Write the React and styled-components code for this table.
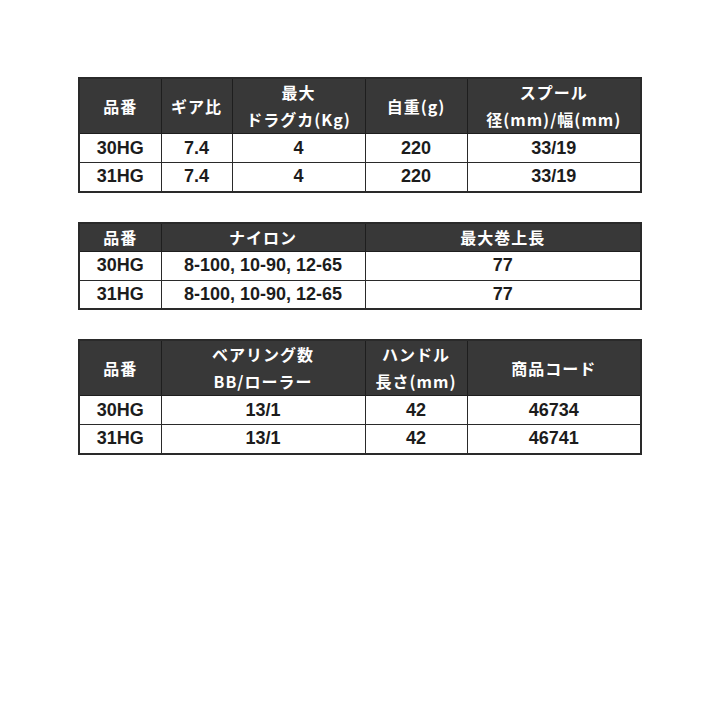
import React from "react"
import styled, { createGlobalStyle } from "styled-components"

const GlobalStyle = createGlobalStyle`
  html, body {
    margin: 0;
    padding: 0;
    background: #ffffff;
  }
  body {
    font-family: "Liberation Sans", "Noto Sans CJK JP", sans-serif;
  }
`

const Page = styled.div`
  padding: 77px 0 0 78px;
  display: flex;
  flex-direction: column;
  gap: 29px;
`

const SpecTable = styled.table`
  width: 562px;
  table-layout: fixed;
  border-collapse: collapse;
  border: 2px solid #2a2a2a;
`

const HeadRow = styled.tr`
  height: ${({ $tall }) => ($tall ? "55px" : "28px")};
`

const HeadCell = styled.th`
  background: #383838;
  color: #ffffff;
  font-family: "Noto Sans CJK JP", sans-serif;
  font-size: 16px;
  font-weight: 700;
  line-height: 27px;
  letter-spacing: 1px;
  text-align: center;
  vertical-align: middle;
  padding: 0;
  border: 1.5px solid #1e1e1e;
`

const BodyRow = styled.tr`
  height: 29px;
`

const Cell = styled.td`
  background: #ffffff;
  color: #1c1c1c;
  font-size: 18px;
  font-weight: 700;
  text-align: center;
  vertical-align: middle;
  padding: 0;
  border: 1.5px solid #2a2a2a;
`

const tables = [
  {
    cols: [82, 71, 133, 102, 174],
    tall: true,
    head: [["品番"], ["ギア比"], ["最大", "ドラグカ(Kg)"], ["自重(g)"], ["スプール", "径(mm)/幅(mm)"]],
    rows: [
      ["30HG", "7.4", "4", "220", "33/19"],
      ["31HG", "7.4", "4", "220", "33/19"],
    ],
  },
  {
    cols: [82, 204, 276],
    tall: false,
    head: [["品番"], ["ナイロン"], ["最大巻上長"]],
    rows: [
      ["30HG", "8-100, 10-90, 12-65", "77"],
      ["31HG", "8-100, 10-90, 12-65", "77"],
    ],
  },
  {
    cols: [82, 204, 102, 174],
    tall: true,
    head: [["品番"], ["ベアリング数", "BB/ローラー"], ["ハンドル", "長さ(mm)"], ["商品コード"]],
    rows: [
      ["30HG", "13/1", "42", "46734"],
      ["31HG", "13/1", "42", "46741"],
    ],
  },
]

export default function App() {
  return (
    <>
      <GlobalStyle />
      <Page>
        {tables.map((t, i) => (
          <SpecTable key={i}>
            <colgroup>
              {t.cols.map((w, j) => (
                <col key={j} style={{ width: w }} />
              ))}
            </colgroup>
            <thead>
              <HeadRow $tall={t.tall}>
                {t.head.map((lines, j) => (
                  <HeadCell key={j}>
                    {lines.map((l, k) => (
                      <div key={k}>{l}</div>
                    ))}
                  </HeadCell>
                ))}
              </HeadRow>
            </thead>
            <tbody>
              {t.rows.map((r, j) => (
                <BodyRow key={j}>
                  {r.map((v, k) => (
                    <Cell key={k}>{v}</Cell>
                  ))}
                </BodyRow>
              ))}
            </tbody>
          </SpecTable>
        ))}
      </Page>
    </>
  )
}
